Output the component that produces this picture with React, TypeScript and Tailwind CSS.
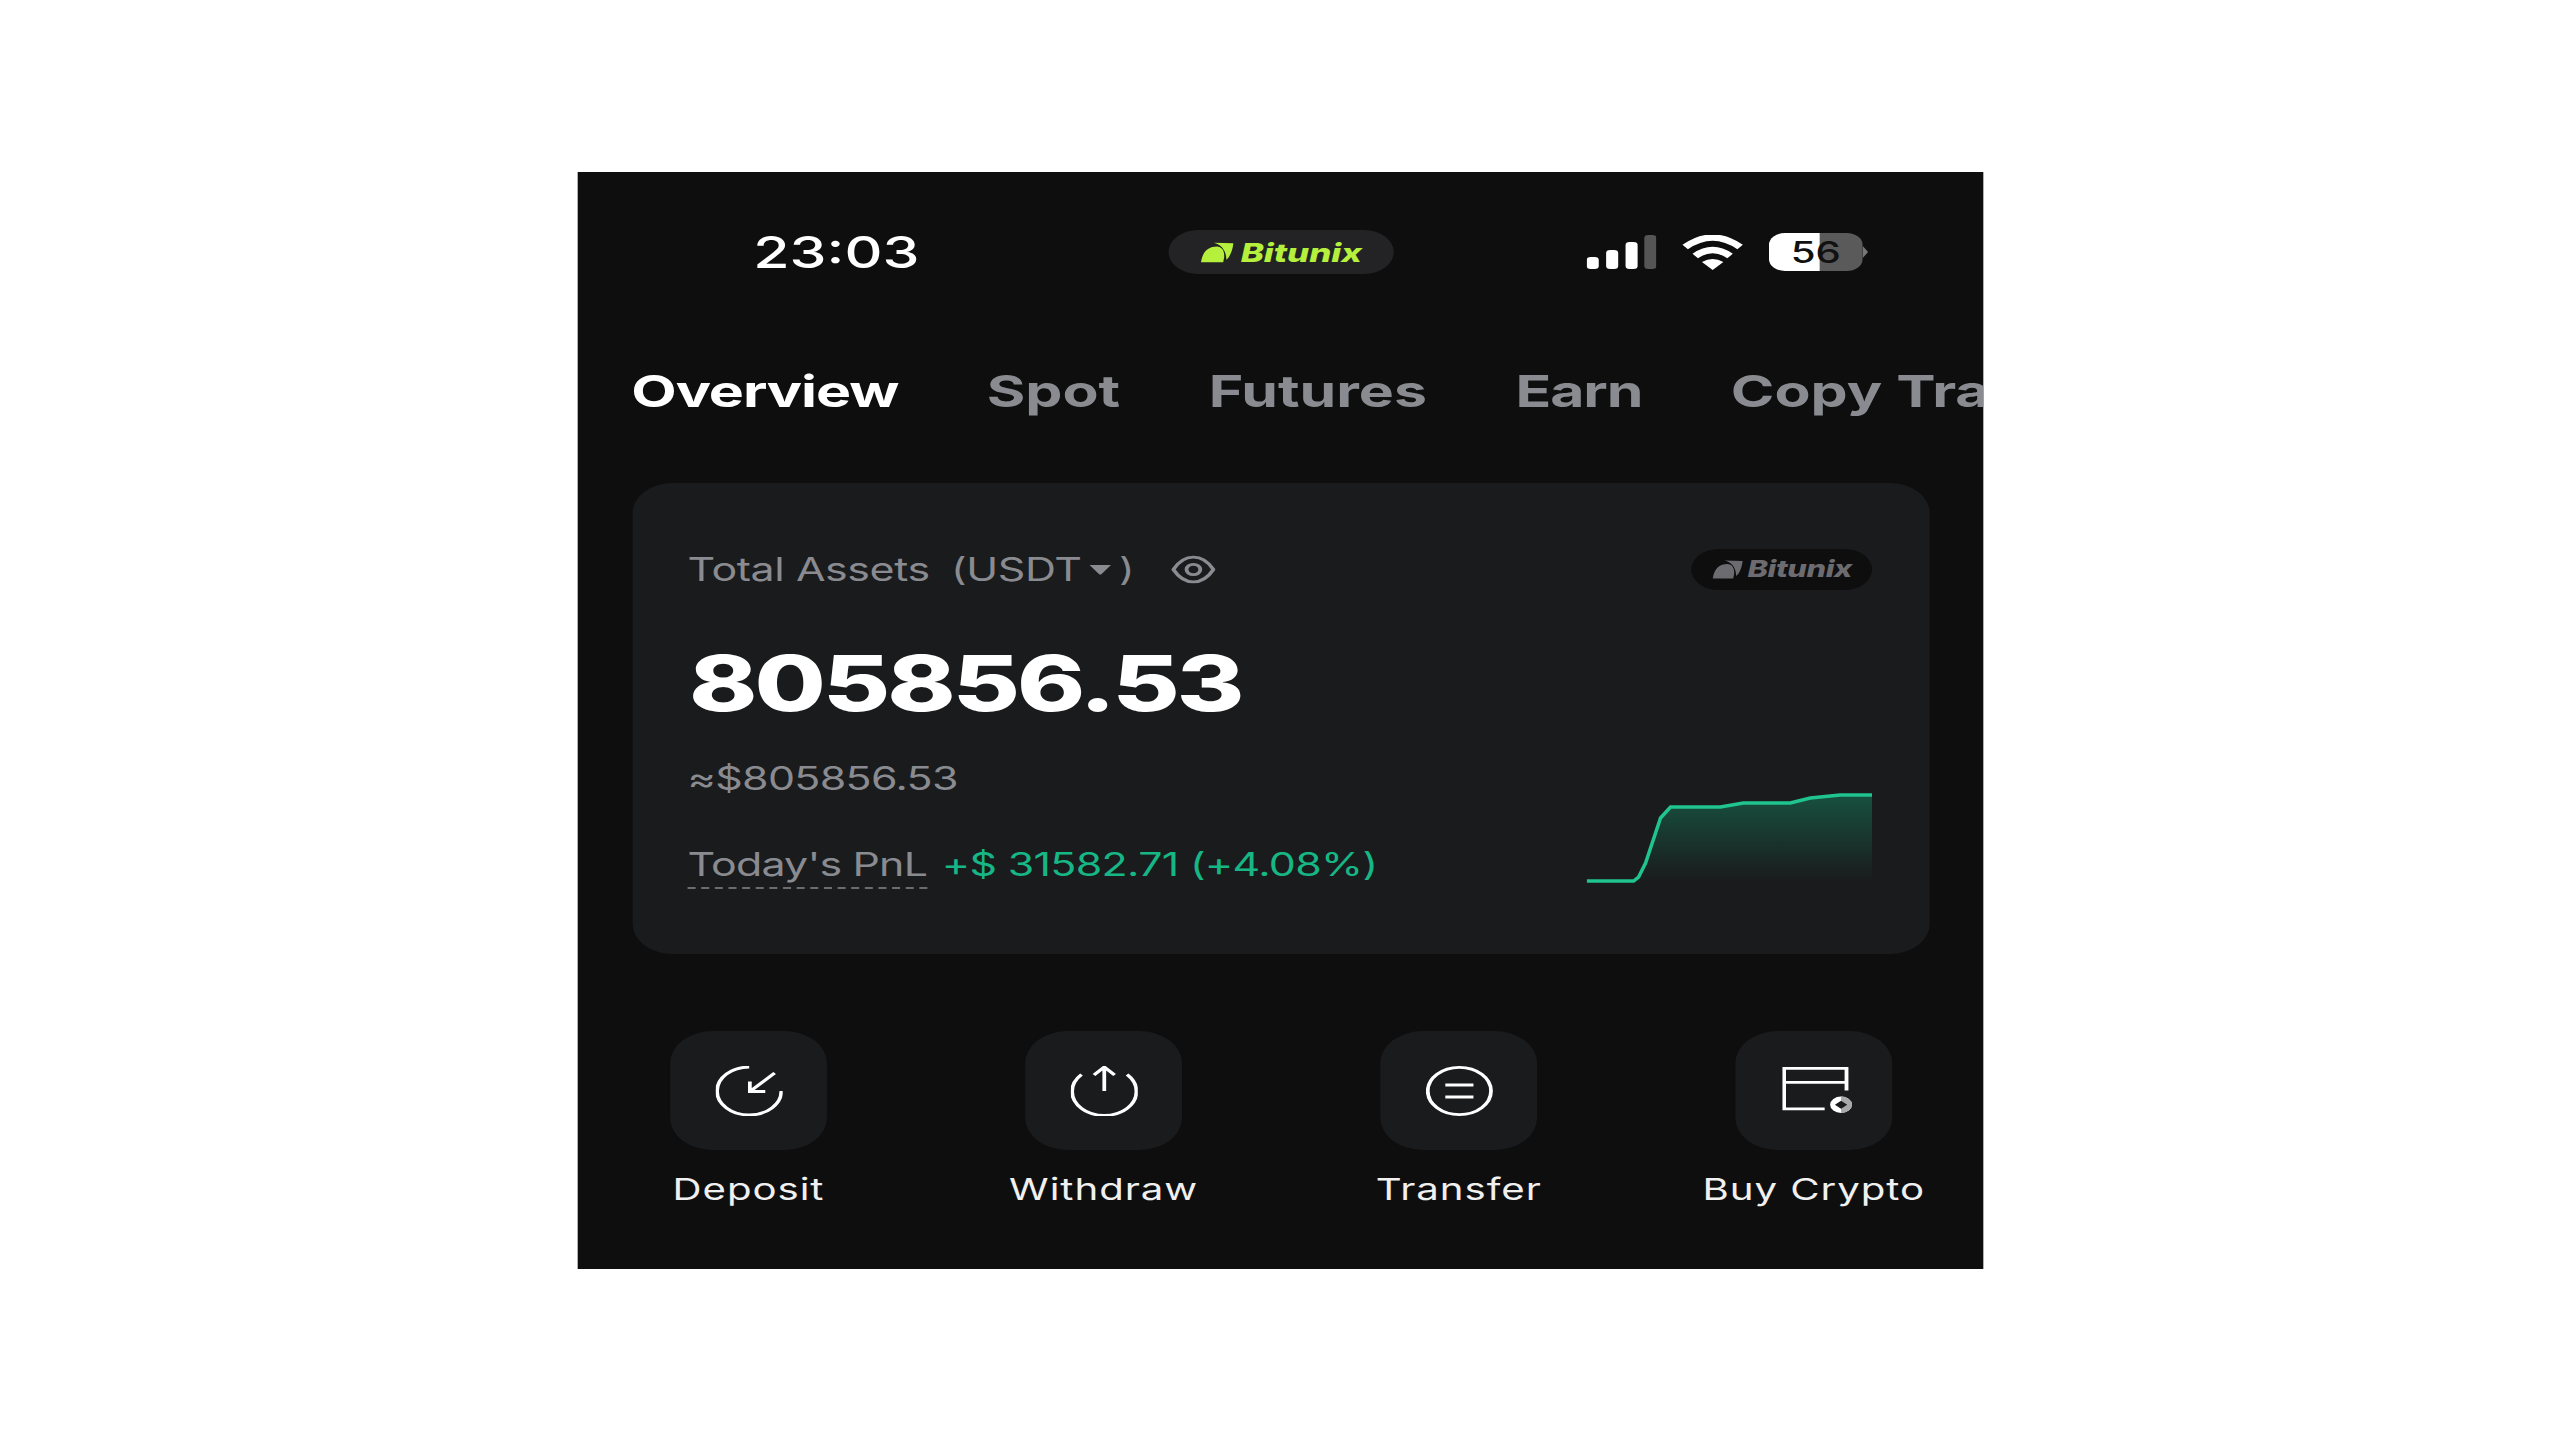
const tabs = [
  { label: 'Overview', className: 'text-white tracking-[-0.8px]' },
  { label: 'Spot', className: '' },
  { label: 'Futures', className: '' },
  { label: 'Earn', className: 'tracking-[-0.8px]' },
  { label: 'Copy Trade', className: '' },
];

function BitunixMark({ className }: { className: string }) {
  return (
    <svg viewBox="140 75 110 70" preserveAspectRatio="none" className={className} fill="currentColor">
      <path d="M145 140C150 105 170 92 195 92C210 92 220 105 218 125L215 140Z" />
      <path d="M185 80L247 82C245 105 235 125 225 132C225 105 210 85 185 80Z" />
    </svg>
  );
}

function StatusIcons() {
  return (
    <div className="flex items-center gap-[19px]">
      <svg viewBox="0 0 52 34" className="w-[52px] h-[34px]">
        <rect x="0" y="22" width="9" height="12" rx="3" fill="#fff" />
        <rect x="14.5" y="15" width="9" height="19" rx="3" fill="#fff" />
        <rect x="29" y="7" width="9" height="27" rx="3" fill="#fff" />
        <rect x="43" y="0" width="9" height="34" rx="3" fill="#555" />
      </svg>
      <svg viewBox="0 0 46 35" className="w-[46px] h-[35px]" fill="none" stroke="#fff" strokeWidth="6">
        <path d="M2.5 12Q23 -7 43.5 12" />
        <path d="M10 21Q23 9 36 21" />
        <path d="M15 27Q23 21 31 27L23 35Z" fill="#fff" stroke="none" />
      </svg>
      <div className="flex items-center">
        <div className="relative flex w-[70px] h-[38px] rounded-[12px] overflow-hidden">
          <div className="w-[38px] bg-white" />
          <div className="flex-1 bg-[#5a5a5a]" />
          <span className="absolute inset-0 flex items-center justify-center text-[30px] font-medium text-[#111]">56</span>
        </div>
        <div className="w-0 h-0 border-y-[6px] border-y-transparent border-l-[4px] border-l-[#777]" />
      </div>
    </div>
  );
}

function DepositIcon() {
  return (
    <svg viewBox="0 0 50 50" className="w-[50px] h-[50px]" fill="none" stroke="#fff" strokeWidth="2.8">
      <path d="M25 1A24 24 0 1 0 49 25" />
      <path d="M44 7L25.5 25.500M25.500 15.500V25.500H37" />
    </svg>
  );
}

function WithdrawIcon() {
  return (
    <svg viewBox="0 0 50 50" className="w-[50px] h-[50px]" fill="none" stroke="#fff" strokeWidth="2.8">
      <path d="M8 8.500A24 24 0 1 0 42 8.500" />
      <path d="M25 25V1M17.300 9L25 1L32.700 9" />
    </svg>
  );
}

function TransferIcon() {
  return (
    <svg viewBox="0 0 50 50" className="w-[50px] h-[50px]" fill="none" stroke="#fff" strokeWidth="2.8">
      <circle cx="25" cy="25" r="23.600" />
      <path d="M14.500 19H35.500M14.500 31H35.500" />
    </svg>
  );
}

function BuyCryptoIcon() {
  return (
    <svg viewBox="0 0 52 46" className="w-[53px] h-[47px] ml-[5px]" fill="none">
      <path d="M31 41H1.300V1.300H47V23M1.300 15H47" stroke="#fff" strokeWidth="2.8" />
      <circle cx="43" cy="37" r="8" fill="#fff" />
      <path d="M43 29A8 8 0 0 1 43 45Z" fill="#a8a8a8" />
      <path d="M43 33L47.500 37L43 41L38.500 37Z" fill="#1a1b1d" />
    </svg>
  );
}

const actions = [
  { label: 'Deposit', icon: DepositIcon },
  { label: 'Withdraw', icon: WithdrawIcon },
  { label: 'Transfer', icon: TransferIcon },
  { label: 'Buy Crypto', icon: BuyCryptoIcon },
];

function PnlChart() {
  return (
    <svg viewBox="1586 793 286 90" className="w-[213px] h-[90px] mb-[6px]" preserveAspectRatio="none" fill="none">
      <defs>
        <linearGradient id="pnl-fill" x1="0" y1="0" x2="0" y2="1">
          <stop offset="0" stopColor="#17503e" />
          <stop offset="1" stopColor="#17503e" stopOpacity="0" />
        </linearGradient>
      </defs>
      <path
        d="M1638 881L1645 863L1660 818L1670 807L1720 807L1743 803L1790 803L1810 798L1840 795L1872 795V881Z"
        fill="url(#pnl-fill)"
      />
      <path
        d="M1586 881H1633L1638 877L1645 863L1660 818L1670 807H1720L1743 803H1790L1810 798L1840 795H1872"
        stroke="#1fc48f"
        strokeWidth="3.5"
      />
    </svg>
  );
}

export default function App() {
  return (
    <div className="min-h-screen bg-white pt-[172px] flex justify-center font-[Inter,sans-serif]">
      {/* the whole phone shot is stretched sideways in the reference */}
      <div className="w-[1049px] h-[1097px] shrink-0 ml-[1px] bg-[#0e0e0f] overflow-hidden scale-x-[1.34]">
        {/* Status bar */}
        <div className="grid grid-cols-[1fr_168px_1fr] items-center pt-[58px]">
          <div className="pl-[131px] text-[44px] leading-[44px] font-medium text-white">23:03</div>
          <div className="h-[44px] rounded-full bg-[#232325] flex items-center justify-center gap-[5px] text-[#b5f03c]">
            <BitunixMark className="w-[26px] h-[23px]" />
            <span className="text-[26px] font-extrabold italic">Bitunix</span>
          </div>
          <div className="flex justify-end pr-[86px]">
            <StatusIcons />
          </div>
        </div>

        {/* Tabs */}
        <div className="flex gap-[66px] pl-[40px] mt-[90px] text-[44px] leading-[54px] font-bold text-[#8a8b90] whitespace-nowrap">
          {tabs.map((tab) => (
            <span key={tab.label} className={tab.className}>
              {tab.label}
            </span>
          ))}
        </div>

        {/* Assets card */}
        <div className="ml-[41px] mr-[40px] mt-[65px] h-[471px] rounded-[30px] bg-[#1a1b1d] pl-[41px] pr-[43px] pt-[66px]">
          <div className="flex items-center justify-between h-[41px]">
            <div className="flex items-center text-[32px] tracking-[-0.3px] text-[#8a8b90]">
              <span>Total Assets</span>
              <span className="ml-[16px]">(USDT</span>
              <svg viewBox="0 0 16 10" className="w-[16px] h-[10px] ml-[6px] mr-[6px]" fill="currentColor">
                <path d="M0 0H16L9 9Q8 10 7 9Z" />
              </svg>
              <span>)</span>
              <svg viewBox="0 0 32 28" className="w-[33px] h-[29px] ml-[28px]" fill="none" stroke="currentColor" strokeWidth="2.8">
                <path d="M1.500 14C6 5 11 2 16 2C21 2 26 5 30.500 14C26 23 21 26 16 26C11 26 6 23 1.500 14Z" />
                <circle cx="16" cy="14" r="5" />
              </svg>
            </div>
            <div className="w-[135px] h-[41px] rounded-full bg-[#0e0e0f] flex items-center justify-center gap-[3px] text-[#6b6b70]">
              <BitunixMark className="w-[24px] h-[21px]" />
              <span className="text-[23px] font-extrabold italic tracking-[-0.3px]">Bitunix</span>
            </div>
          </div>

          <div className="flex justify-between items-end">
            <div>
              <div className="mt-[47px] ml-[1px] text-[77px] leading-[92px] font-extrabold tracking-[-2.2px] text-white">805856.53</div>
              <div className="mt-[30px] text-[32px] leading-[40px] tracking-[-0.5px] text-[#8a8b90]">≈$805856.53</div>
              <div className="mt-[46px] flex items-start text-[32px] leading-[40px] tracking-[-0.5px]">
                <span className="text-[#8a8b90] border-b-2 border-dashed border-[#6b6b70] pb-[2px] tracking-[-0.6px]">Today's PnL</span>
                <span className="ml-[11px] text-[#16b685]">+$ 31582.71 (+4.08%)</span>
              </div>
            </div>
            <PnlChart />
          </div>
        </div>

        {/* Quick actions */}
        <div className="flex justify-between pl-[45px] pr-[44px] mt-[77px]">
          {actions.map((action) => {
            const Icon = action.icon;
            return (
              <div key={action.label} className="w-[165px] flex flex-col items-center">
                <div className="w-[117px] h-[119px] rounded-[32px] bg-[#1a1b1d] flex items-center justify-center">
                  <Icon />
                </div>
                <span className="mt-[21px] text-[30px] leading-[36px] tracking-[0.7px] text-[#f0f0f0] whitespace-nowrap">{action.label}</span>
              </div>
            );
          })}
        </div>
      </div>
    </div>
  );
}
